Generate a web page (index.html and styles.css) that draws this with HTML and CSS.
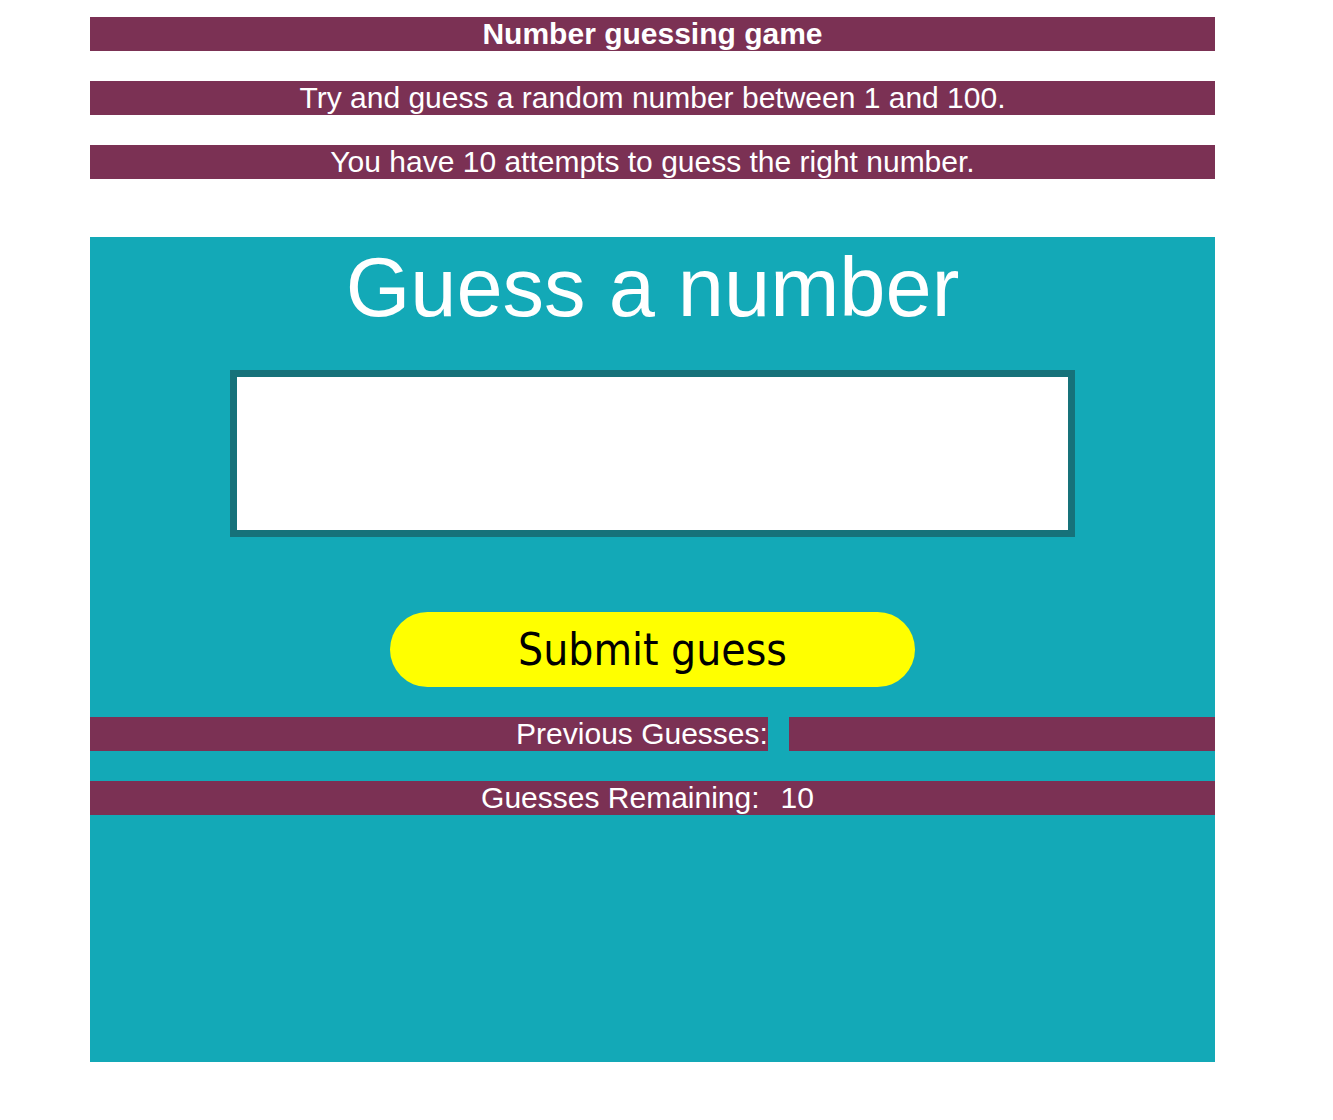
FILE: index.html
```html
<!DOCTYPE html>
<html lang="en">
<head>
<meta charset="utf-8">
<title>Number guessing game</title>
<link rel="stylesheet" href="styles.css">
</head>
<body>
<div class="page">
  <h1 class="bar bar-title">Number guessing game</h1>
  <p class="bar">Try and guess a random number between 1 and 100.</p>
  <p class="bar">You have 10 attempts to guess the right number.</p>
  <section class="game">
    <h2 class="game-title">Guess a number</h2>
    <input class="guess-field" type="text" aria-label="Guess">
    <button class="submit" type="button">Submit guess</button>
    <p class="bar">Previous Guesses:<span class="gap"></span></p>
    <p class="bar bar-last">Guesses Remaining:<span class="value">10</span></p>
  </section>
</div>
</body>
</html>
```

FILE: styles.css
```css
html, body {
  margin: 0;
  padding: 0;
  background: #ffffff;
}
body {
  font-family: "Liberation Sans", Arial, sans-serif;
}
.page {
  width: 1125px;
  margin-left: 90px;
  padding-top: 17px;
  padding-bottom: 58px;
}
.bar {
  margin: 0 0 30px 0;
  background: #7b3154;
  color: #ffffff;
  font-size: 30px;
  line-height: 34px;
  height: 34px;
  text-align: center;
  font-weight: normal;
  white-space: nowrap;
}
.bar-title {
  font-weight: bold;
}
.page > .bar:nth-of-type(2) {
  margin-bottom: 58px;
}
.game {
  background: #13a9b7;
  height: 825px;
  display: flex;
  flex-direction: column;
  align-items: center;
}
.game-title {
  margin: 2px 0 0 0;
  color: #ffffff;
  font-weight: normal;
  font-size: 83px;
  line-height: 97px;
  height: 97px;
}
.guess-field {
  margin-top: 34px;
  width: 845px;
  height: 167px;
  box-sizing: border-box;
  border: 7px solid #16727a;
  background: #ffffff;
  padding: 0;
  outline: none;
}
.submit {
  margin-top: 75px;
  width: 525px;
  height: 75px;
  border: none;
  border-radius: 38px;
  background: #ffff00;
  color: #000000;
  font-family: "DejaVu Sans Condensed", "DejaVu Sans", sans-serif;
  font-size: 44px;
  padding: 0;
}
.game .bar {
  align-self: stretch;
}
.game .bar:first-of-type {
  margin-top: 30px;
}
.gap {
  display: inline-block;
  width: 21px;
  height: 34px;
  background: #13a9b7;
  vertical-align: top;
}
.value {
  margin-left: 21px;
  padding-right: 10px;
}
```
